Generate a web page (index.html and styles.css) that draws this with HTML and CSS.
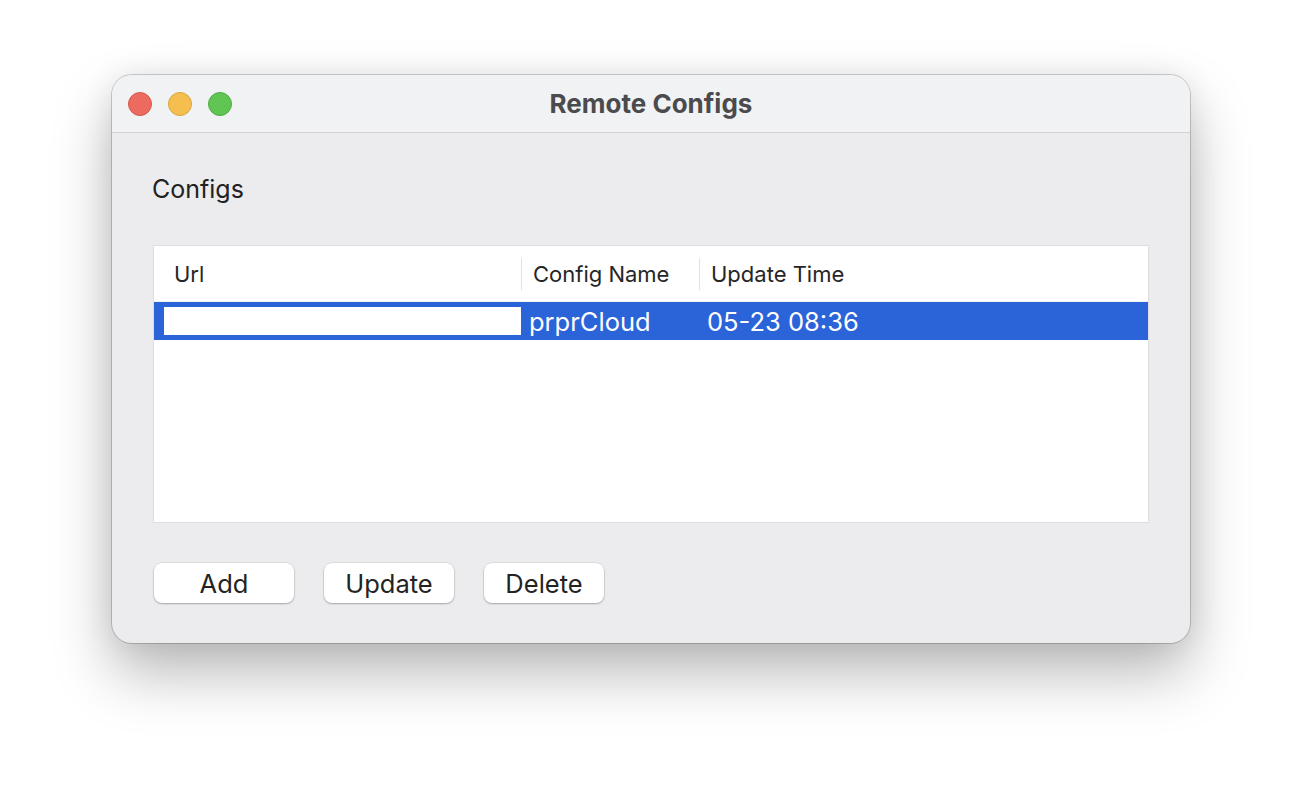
FILE: index.html
```html
<!DOCTYPE html>
<html lang='en'>

<head>
  <meta charset='UTF-8'>
  <meta name='viewport' content='width=device-width, initial-scale=1.0'>
  <title>Remote Configs</title>
  <link rel="stylesheet" href="styles.css">
</head>

<body>
  <div class='window'>
    <div class='titlebar'>
      <div class='lights'>
        <span class='light close'></span>
        <span class='light minimize'></span>
        <span class='light zoom'></span>
      </div>
      <div class='title'>Remote Configs</div>
    </div>
    <div class='content'>
      <div class='section-label'>Configs</div>
      <div class='table'>
        <div class='table-header'>
          <div class='col col-url'>Url</div>
          <div class='col col-name'>Config Name</div>
          <div class='col col-time'>Update Time</div>
        </div>
        <div class='table-row selected'>
          <div class='cell col-url'><div class='redacted'></div></div>
          <div class='cell col-name'>prprCloud</div>
          <div class='cell col-time'>05-23 08:36</div>
        </div>
      </div>
      <div class='actions'>
        <button type='button' class='btn btn-add'>Add</button>
        <button type='button' class='btn btn-update'>Update</button>
        <button type='button' class='btn btn-delete'>Delete</button>
      </div>
    </div>
  </div>
</body>

</html>
```

FILE: styles.css
```css
html {
  width: 100%;
  height: 100%;
  margin: 0;
}

body {
  margin: 0;
  width: 100%;
  height: 100%;
  background-color: #ffffff;
  font-family: Inter, "Liberation Sans", sans-serif;
  overflow: hidden;
}

.window {
  width: 1078px;
  height: 568px;
  margin: 75px 0 0 112px;
  border-radius: 20px;
  background-color: #ececee;
  box-shadow: 0 0 0 1px rgba(0, 0, 0, .18), 0 30px 60px rgba(0, 0, 0, .28), 0 0 30px rgba(0, 0, 0, .08);
  display: flex;
  flex-direction: column;
  overflow: hidden;
}

.titlebar {
  height: 57px;
  background-color: #f1f2f4;
  border-bottom: 1px solid #d3d3d5;
  display: flex;
  align-items: center;
  position: relative;
}

.lights {
  display: flex;
  gap: 16px;
  margin-left: 16px;
}

.light {
  width: 22px;
  height: 22px;
  border-radius: 50%;
  display: block;
}

.close {
  background-color: #ed6a5e;
  border: 1px solid #d4574c;
}

.minimize {
  background-color: #f5bf4f;
  border: 1px solid #d9a33c;
}

.zoom {
  background-color: #61c554;
  border: 1px solid #4fa944;
}

.title {
  position: absolute;
  left: 0;
  right: 0;
  text-align: center;
  font-weight: 700;
  font-size: 26px;
  color: #4b4b4d;
}

.content {
  flex: 1;
  padding: 0 41px 0 41px;
  display: flex;
  flex-direction: column;
}

.section-label {
  margin: 41px 0 0 -1px;
  font-size: 25px;
  color: #222222;
  line-height: 30px;
}

.table {
  margin-top: 41px;
  height: 276px;
  background-color: #ffffff;
  border: 1px solid #dddddf;
}

.table-header {
  height: 55px;
  display: flex;
  align-items: center;
  border-bottom: 1px solid #f2f2f2;
  font-size: 22px;
  color: #262626;
}

.col {
  height: 32px;
  display: flex;
  align-items: center;
  box-sizing: border-box;
}

.col-url {
  width: 367px;
  padding-left: 20px;
  box-sizing: border-box;
}

.col-name {
  width: 178px;
  border-left: 1px solid #e2e2e2;
  padding-left: 11px;
  box-sizing: border-box;
}

.col-time {
  flex: 1;
  border-left: 1px solid #e2e2e2;
  padding-left: 11px;
}

.table-row {
  height: 38px;
  display: flex;
  align-items: center;
  font-size: 25.5px;
}

.selected {
  background-color: #2b63d9;
  color: #ffffff;
}

.cell {
  height: 100%;
  display: flex;
  align-items: center;
  box-sizing: border-box;
}

.table-row .col-url {
  padding-left: 10px;
}

.table-row .col-name,
.table-row .col-time {
  border-left: none;
  padding-left: 8px;
}

.redacted {
  width: 357px;
  height: 28px;
  background-color: #ffffff;
}

.actions {
  margin-top: 40px;
  display: flex;
  gap: 30px;
}

.btn {
  height: 40px;
  background-color: #ffffff;
  border: none;
  border-radius: 8px;
  box-shadow: 0 0 0 0.5px rgba(0, 0, 0, .12), 0 1px 2px rgba(0, 0, 0, .25);
  font-family: Inter, "Liberation Sans", sans-serif;
  font-size: 25.5px;
  color: #232323;
  display: flex;
  justify-content: center;
  align-items: center;
  padding: 0;
}

.btn-add {
  width: 140px;
  margin-left: 1px;
}

.btn-update {
  width: 130px;
}

.btn-delete {
  width: 120px;
}
```
